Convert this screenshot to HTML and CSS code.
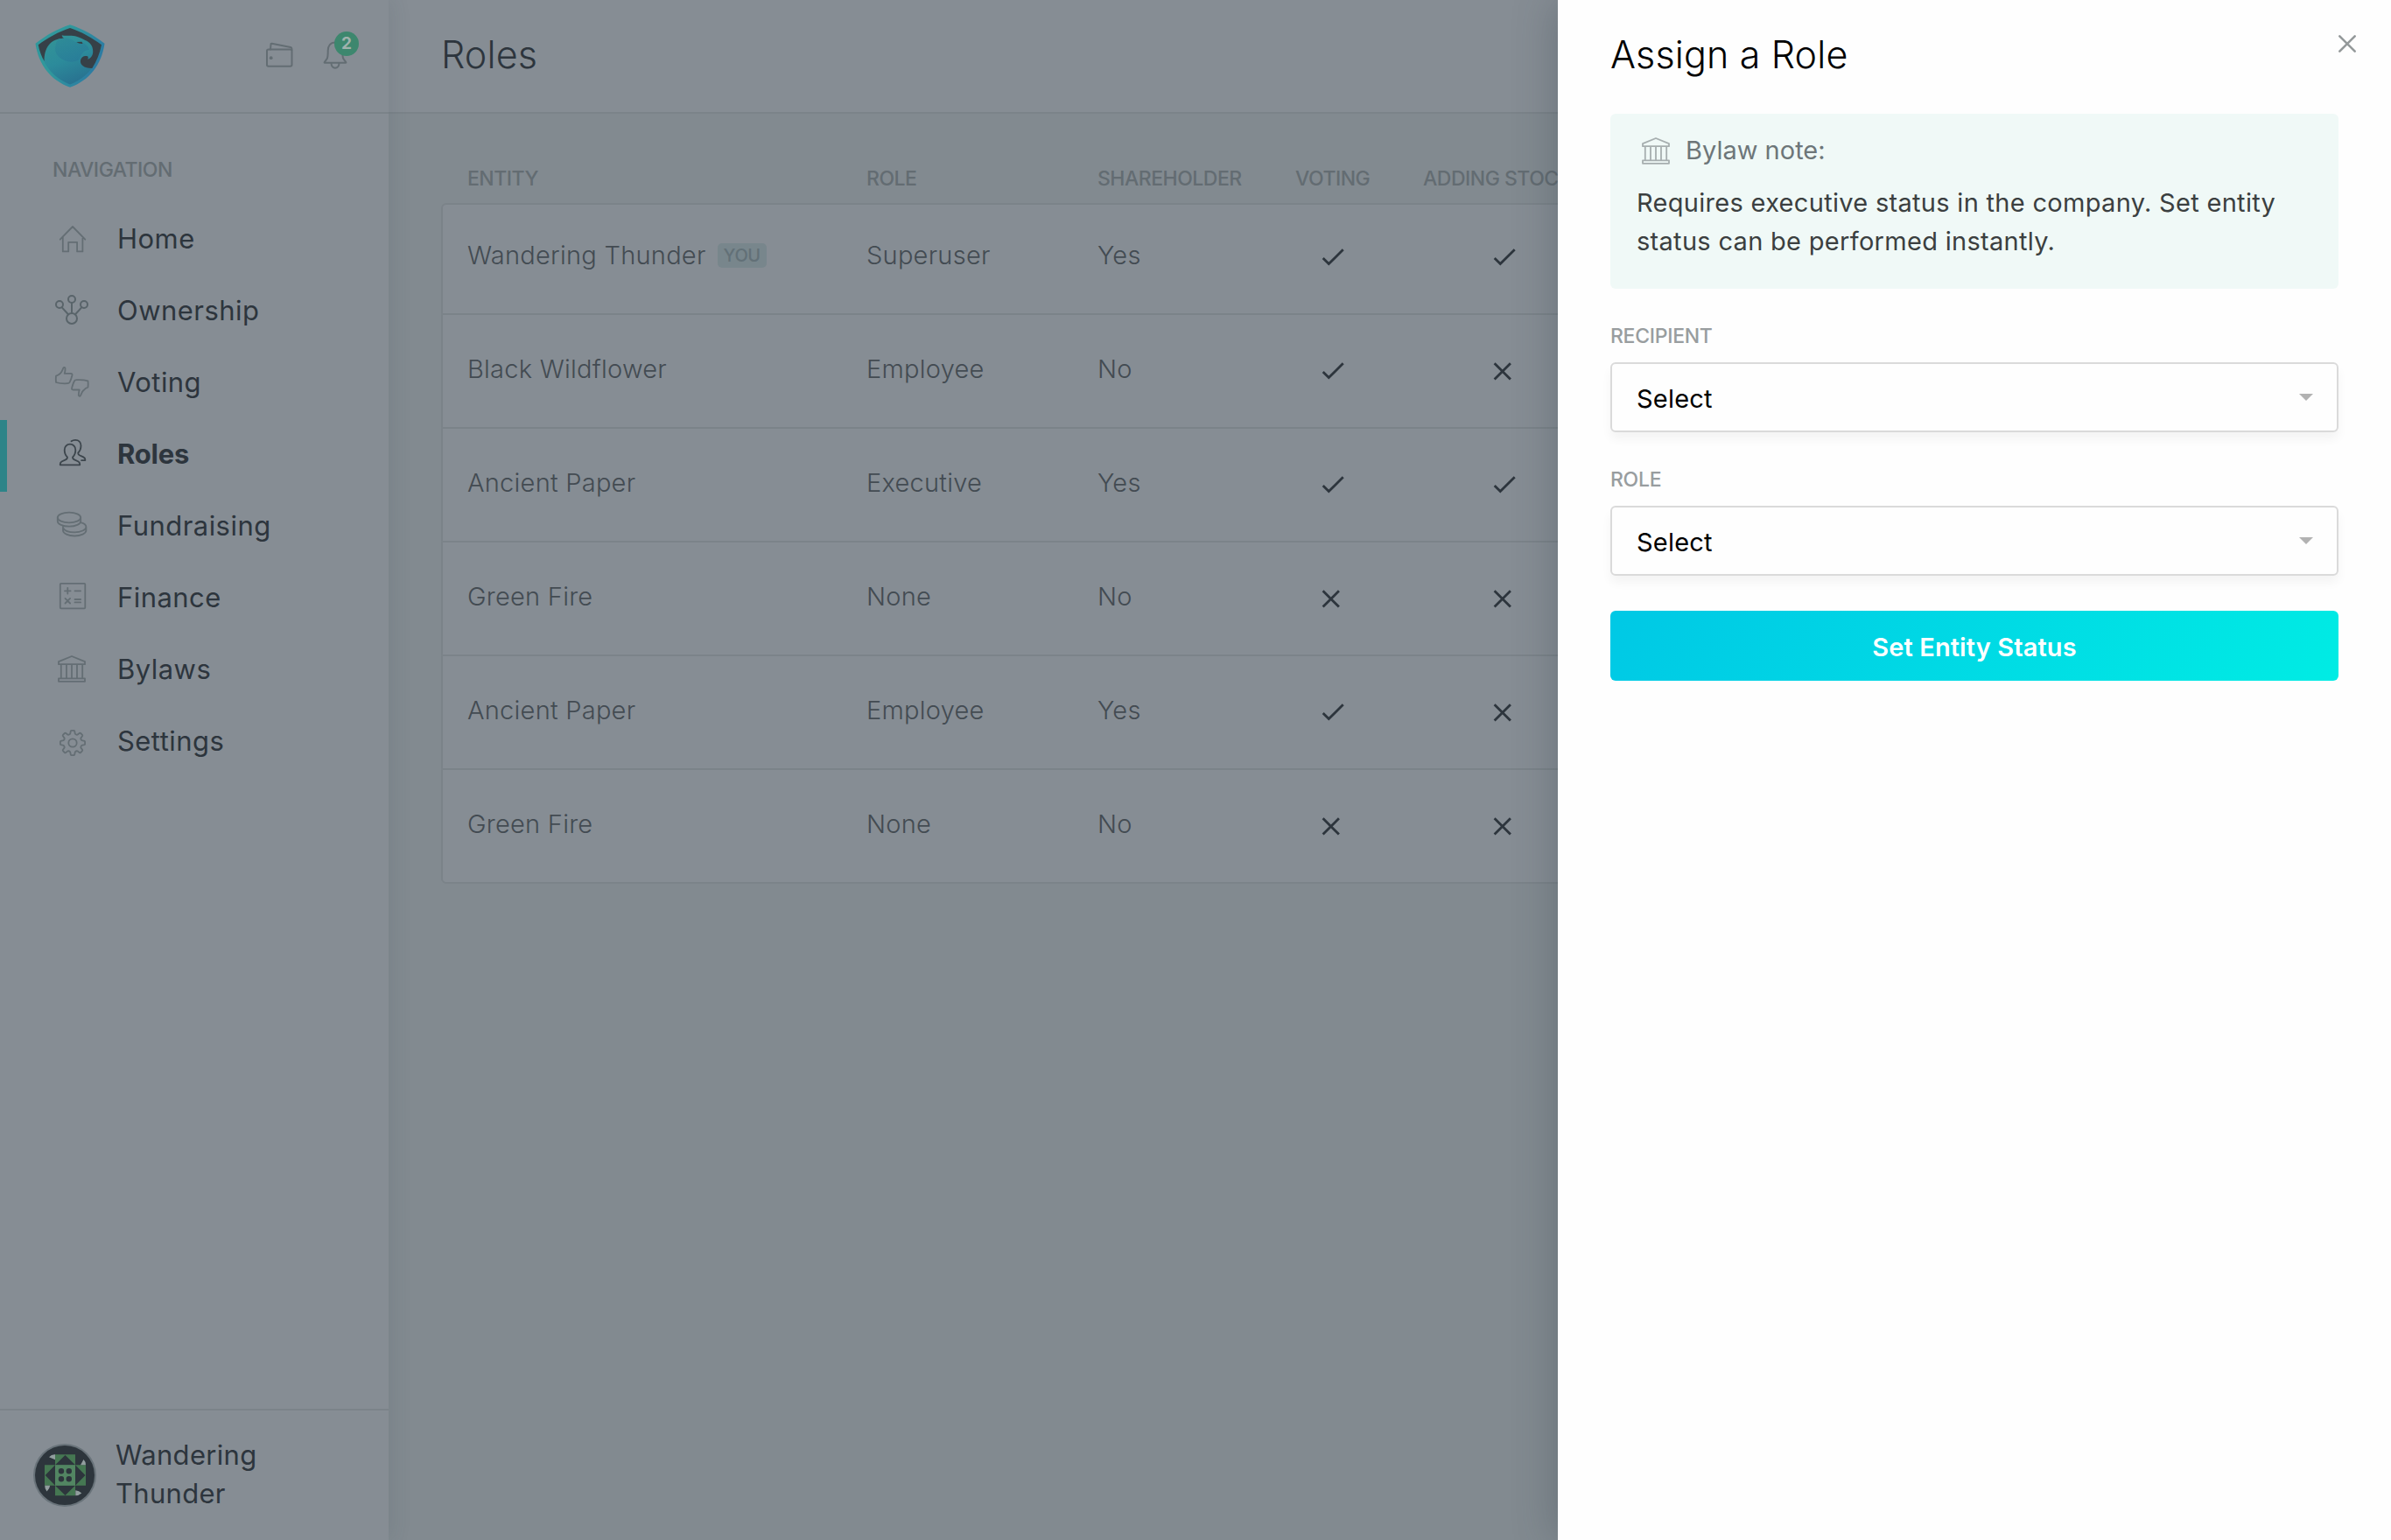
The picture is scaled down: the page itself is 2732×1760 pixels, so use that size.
FILE: index.html
```html
<!DOCTYPE html>
<html lang="en">
<head>
<meta charset="utf-8">
<title>Roles</title>
<link rel="stylesheet" href="styles.css">
</head>
<body>
<svg class="sprite" aria-hidden="true">
  <defs>
    <symbol id="home" viewBox="0 0 44 44"><path d="M8.7 20.7 23 6l14.3 14.7M11.8 17.8v16.6h6.4V23.8h9.9v10.6h6.3V17.8"/></symbol>
    <symbol id="ownership" viewBox="0 0 44 44"><circle cx="8" cy="13" r="4"/><circle cx="22" cy="7" r="4"/><circle cx="36" cy="13" r="4"/><circle cx="22" cy="29" r="6"/><path d="M10.8 16.3 17.7 24M33.2 16.3 26.3 24M22 11.2V23"/></symbol>
    <symbol id="voting" viewBox="0 0 44 44"><path d="M9 9.7C11 8 11.6 5 12.4 3.4c.6-1 2.1-.6 2.1.7.1 2 0 4-.8 5.8h7.2c1.2 0 1.9.8 1.6 1.8-.8 3.2-1.7 6-2.9 8.2-.5.9-1.2 1.3-2.3 1.3-4.6.3-9.3 0-13.3-1.2-.3-2.3-.3-4.7 0-7.3 1.6-.3 3.5-1.4 5-3z"/><path d="M35.3 29.3C33.3 31 32.7 34 31.9 35.2c-.6 1-2.1.6-2.1-.7 0-2 .2-4 1-6h-7.200c-1.200 0-1.900-.8-1.600-1.800.8-3.200 1.700-6 2.900-8.200.5-.9 1.200-1.300 2.300-1.300 4.600-.3 9.300 0 13.300 1.200.3 2.300.3 4.700 0 7.300-1.600.3-3.700 1.900-5.200 3.600z"/></symbol>
    <symbol id="roles" viewBox="0 0 44 44"><path d="M20 8.700c-4 0-6.300 2.700-6.300 6.500 0 3.300 1 6 3.200 8.200.2 1.200-.4 2.100-1.500 2.700L10.500 28.500C9 29.300 8.600 30.600 8.800 32.300H31.200c.2-1.700-.2-3-1.700-3.800l-4.900-2.400c-1.100-.6-1.700-1.500-1.500-2.700 2.200-2.200 3.200-4.900 3.200-8.200 0-3.800-2.300-6.500-6.300-6.500z"/><path d="M21.500 5.300c1.300-1 2.800-1.500 4.500-1.500 4 0 6.500 2.600 6.500 6.500 0 3.300-1 6-3.200 8.200-.2 1.200.4 2.100 1.500 2.700l4.500 2.200c1.700.8 2.300 1.900 2 3.800h-4.200"/></symbol>
    <symbol id="fundraising" viewBox="0 0 44 44"><ellipse cx="19" cy="10.500" rx="13.200" ry="5.900"/><path d="M5.800 10.500v4.200c0 3.300 5.900 6 13.200 6s13.200-2.700 13.200-6v-4.200M12 20.500v4.800c0 3.400 6 6.200 13.200 6.200s13.200-2.800 13.200-6.200v-4c0-2.400-2.500-4.300-6.200-5.200M12.200 22.300c1.300 2.900 6.500 5 13 5 7.200 0 13.200-2.700 13.200-6"/></symbol>
    <symbol id="finance" viewBox="0 0 44 44"><rect x="8.800" y="3.800" width="28.500" height="28.500" rx="1"/><path d="M17.300 9v6.600M14 12.300h6.600M25.500 12.300h6.600M14.500 20.900l5.600 5.600M20.100 20.900l-5.600 5.600M25.500 22h6.600M25.500 25.400h6.600"/></symbol>
    <symbol id="bylaws" viewBox="0 0 44 44"><path d="M22 5 37 11.200v3H7v-3zM7 30.300h30v3.500H7zM9.800 14.200v16M16 14.200v16M22 14.200v16M28 14.200v16M34.200 14.200v16"/></symbol>
    <symbol id="settings" viewBox="0 0 44 44"><circle cx="23" cy="22" r="4.700"/><path transform="translate(23 22)" d="M-2.800-10.400-2.200-13.500Q-2-14.100-1.200-14.100H1.200Q2-14.100 2.200-13.500L2.800-10.400Q4.200-9 5.400-9.300L8-11.200Q8.600-11.500 9.200-11L11-9.200Q11.500-8.600 11.200-8L9.300-5.400Q9-4.200 10.400-2.800L13.500-2.200Q14.100-2 14.100-1.200V1.200Q14.100 2 13.500 2.200L10.400 2.800Q9 4.200 9.300 5.400L11.200 8Q11.500 8.600 11 9.200L9.200 11Q8.600 11.500 8 11.200L5.400 9.300Q4.200 9 2.800 10.400L2.200 13.500Q2 14.100 1.200 14.100H-1.200Q-2 14.100-2.200 13.500L-2.800 10.400Q-4.200 9-5.400 9.300L-8 11.200Q-8.600 11.500-9.200 11L-11 9.200Q-11.500 8.600-11.200 8L-9.300 5.400Q-9 4.200-10.400 2.800L-13.500 2.200Q-14.100 2-14.100 1.200V-1.200Q-14.100-2-13.500-2.200L-10.400-2.800Q-9-4.200-9.300-5.400L-11.200-8Q-11.500-8.600-11-9.200L-9.200-11Q-8.600-11.500-8-11.200L-5.400-9.300Q-4.200-9-2.800-10.400Z"/></symbol>
    <symbol id="check" viewBox="0 0 28 28"><path d="M3.700 15 10.300 21.600 26.700 5.200"/></symbol>
    <symbol id="cross" viewBox="0 0 28 28"><path d="M3.600 5.300 21.900 23.600M21.900 5.300 3.600 23.600"/></symbol>
  </defs>
</svg>

<div class="app">
  <aside class="sidebar">
    <div class="sidebar-top">
      <svg class="logo" width="80" height="72" viewBox="0 0 80 72">
        <defs>
          <linearGradient id="rim" x1="0" y1="0" x2="1" y2=".4"><stop offset=".45" stop-color="#30989c"/><stop offset="1" stop-color="#2c7ba3"/></linearGradient>
          <linearGradient id="eagle" x1=".25" y1=".1" x2=".65" y2="1"><stop offset="0" stop-color="#339496"/><stop offset=".5" stop-color="#2c8b9b"/><stop offset="1" stop-color="#286f8f"/></linearGradient>
          <linearGradient id="face" x1="0" y1="0" x2=".6" y2="1"><stop offset="0" stop-color="#2d8a98"/><stop offset="1" stop-color="#287a98"/></linearGradient>
        </defs>
        <path fill="url(#rim)" d="M40 .3C54 5 67 12 79.500 21.700 76 46 62 64 40 71.700 18 64 4 46 .5 21.700 13 12 26 5 40 .3z"/>
        <path fill="url(#eagle)" d="M40 4c13 4.300 25 11 36 19.300C72 45 60 61 40 68.500 20 61 8 45 4 23.300 15 15 27 8.300 40 4z"/>
        <path fill="#364047" d="M40 4C27 8.300 14.700 15 3.700 23.300 5 30 7.300 36.500 10.700 42c-.5-15.500 7-26 22.600-26.300C31.500 15 31 13.500 30.700 12.300c3.300.9 7 .3 11 .4 6 .2 10.500 2.500 15.600 5.300 5.500 2 8.700 6.500 8.900 12 .3 5-2 8.500-6.200 9.700 1.200-1.300 1-2.600 0-3.400-3.200-1.200-7 .2-8 4.500-.9 5.500 4.500 9.500 13.300 9.200C70.500 42 74 33 76 23.300 65 15 53 8.300 40 4z"/>
        <path fill="url(#face)" d="M26 17.200C35 14 41 16 46 20l8 .5c4 1.500 7 4.500 8 8.500-5-.5-9 4-11 10.500-4 3.500-9.500 4-14.500 2.500C28 39.500 23 34 23 28c0-4 1-8 3-10.800z" opacity=".75"/>
        <path fill="#364047" d="m47.300 20 6.200-.2 1 2.200q-4 .4-7.200-2z"/>
      </svg>
      <svg class="wallet line" width="32" height="30" viewBox="0 0 32 30"><rect x="2" y="8.500" width="28.500" height="19.300" rx="1.800"/><path d="M6 8.500 6.500 2.600q.1-1 1.100-.8L29 5.900q1.500.4 1.500 3"/><circle class="dot" cx="6.700" cy="18.200" r="1.900"/></svg>
      <span class="bell">
        <svg class="line" width="30" height="34" viewBox="0 0 30 34"><path d="M14 2.500c-5.400 0-8.300 4-8.300 9.500 0 4 .2 7.500-1.400 9.700L1.700 25.200q-.4.600.3.600h24q.7 0 .3-.6l-2.600-3.500c-1.600-2.200-1.400-5.700-1.400-9.700 0-5.500-2.900-9.500-8.300-9.500zM9.500 26c0 7.500 9 7.500 9 0"/></svg>
        <b class="badge">2</b>
      </span>
    </div>
    <h2 class="label nav-label">NAVIGATION</h2>
    <nav class="nav">
      <a><svg><use href="#home"/></svg><span>Home</span></a>
      <a><svg class="strong"><use href="#ownership"/></svg><span>Ownership</span></a>
      <a><svg><use href="#voting"/></svg><span>Voting</span></a>
      <a class="active"><svg><use href="#roles"/></svg><span>Roles</span></a>
      <a><svg><use href="#fundraising"/></svg><span>Fundraising</span></a>
      <a><svg><use href="#finance"/></svg><span>Finance</span></a>
      <a><svg><use href="#bylaws"/></svg><span>Bylaws</span></a>
      <a><svg><use href="#settings"/></svg><span>Settings</span></a>
    </nav>
    <div class="account">
      <svg class="avatar" width="72" height="72" viewBox="0 0 72 72">
        <circle cx="36" cy="36" r="36" fill="#69737a"/><circle cx="36" cy="36" r="34" fill="#2d353c"/>
        <path fill="#457752" d="M25 12.300h23v12h12v23.400H48v11.600H25V47.700H13V24.300h12z"/>
        <path fill="#2d353c" d="M36.500 13 48 24.300H25zM36.500 59 25 47.700h23zM13.700 36 25 24.300v23.400zM59.500 36 48 24.300v23.400z"/>
        <path fill="#528562" d="M25 24.300h23v23.400H25z"/>
        <g fill="#2d353c"><circle cx="32" cy="31.200" r="3.200"/><circle cx="40.800" cy="31.200" r="3.200"/><circle cx="32" cy="40.200" r="3.200"/><circle cx="40.800" cy="40.200" r="3.200"/></g>
        <path fill="#929e9f" d="M18 15.300Q21 12 25 12.300v6zM57.500 18Q60.500 21 60 24.300h-6zM13.200 47.700h6q-.5 4-3.700 6.800Q13 51.500 13.200 47.700zM48.300 53.300q4 .3 7 3.300-3 2.700-7 2.700z"/>
      </svg>
      <div class="who">Wandering<br>Thunder</div>
    </div>
  </aside>

  <main class="main">
    <header class="topbar"><h1 class="title">Roles</h1></header>
    <section class="table">
      <div class="thead label"><span>ENTITY</span><span>ROLE</span><span>SHAREHOLDER</span><span>VOTING</span><span>ADDING STOCK</span></div>
      <div class="tbody">
        <div class="row"><span class="cell"><span>Wandering Thunder</span><em class="you">YOU</em></span><span>Superuser</span><span>Yes</span><svg><use href="#check"/></svg><svg><use href="#check"/></svg></div>
        <div class="row"><span>Black Wildflower</span><span>Employee</span><span>No</span><svg><use href="#check"/></svg><svg><use href="#cross"/></svg></div>
        <div class="row"><span>Ancient Paper</span><span>Executive</span><span>Yes</span><svg><use href="#check"/></svg><svg><use href="#check"/></svg></div>
        <div class="row"><span>Green Fire</span><span>None</span><span>No</span><svg><use href="#cross"/></svg><svg><use href="#cross"/></svg></div>
        <div class="row"><span>Ancient Paper</span><span>Employee</span><span>Yes</span><svg><use href="#check"/></svg><svg><use href="#cross"/></svg></div>
        <div class="row"><span>Green Fire</span><span>None</span><span>No</span><svg><use href="#cross"/></svg><svg><use href="#cross"/></svg></div>
      </div>
    </section>
  </main>
</div>

<section class="panel">
  <svg class="close" width="24" height="24" viewBox="0 0 24 24"><path d="M3.300 3.300 20.700 20.700M20.700 3.300 3.300 20.700"/></svg>
  <h1 class="title">Assign a Role</h1>
  <div class="note">
    <div class="note-head"><svg><use href="#bylaws"/></svg><span>Bylaw note:</span></div>
    <p>Requires executive status in the company. Set entity<br>status can be performed instantly.</p>
  </div>
  <div class="label field-label">RECIPIENT</div>
  <div class="select"><span>Select</span><i class="caret"></i></div>
  <div class="label field-label">ROLE</div>
  <div class="select"><span>Select</span><i class="caret"></i></div>
  <div class="button">Set Entity Status</div>
</section>
</body>
</html>
```
FILE: styles.css
```css
* { box-sizing: border-box; }
body {
  margin: 0;
  width: 2732px;
  height: 1760px;
  overflow: hidden;
  position: relative;
  font-family: Inter, "Liberation Sans", sans-serif;
  font-size: 29px;
  font-weight: 400;
  background: #828a90;
}
h1, h2, p { margin: 0; font-weight: inherit; }
svg { display: block; flex: none; fill: none; }
.sprite { position: absolute; width: 0; height: 0; }
.app { display: flex; height: 1760px; }

.label { font-size: 23px; line-height: 28px; font-weight: 550; letter-spacing: -.5px; color: #636c72; }
.title { font-size: 43px; line-height: 125px; font-weight: 300; letter-spacing: .15px; }

/* Sidebar */
.sidebar {
  display: flex;
  flex-direction: column;
  flex: none;
  width: 444px;
  background: #868d94;
  color: #2d353d;
  box-shadow: 2px 0 22px rgba(60, 75, 85, .14);
  z-index: 1;
}
.sidebar-top {
  display: flex;
  height: 130px;
  padding: 28px 0 0 40px;
  border-bottom: 2px solid #7b8389;
}
.line { stroke: #636d73; stroke-width: 2; stroke-linejoin: round; stroke-linecap: round; }
.line .dot { fill: #636d73; stroke: none; }
.wallet { margin: 20px 0 0 183px; }
.bell { position: relative; margin: 18px 0 0 34px; width: 30px; height: 34px; }
.badge {
  position: absolute;
  left: 13px;
  top: -10px;
  width: 28px;
  height: 28px;
  border-radius: 50%;
  background: #3d876e;
  color: #a0b2ad;
  font-size: 19px;
  line-height: 27px;
  font-weight: 700;
  text-align: center;
}
.nav-label { margin: 50px 0 26px 60px; }
.nav a {
  display: flex;
  height: 82px;
  padding-left: 60px;
  gap: 30px;
  font-size: 31px;
  font-weight: 370;
  line-height: 78px;
  letter-spacing: .45px;
}
.nav svg {
  width: 44px;
  height: 44px;
  margin-top: 19px;
  stroke: #646e74;
  stroke-width: 1.8;
  stroke-linejoin: round;
  stroke-linecap: round;
}
.nav .strong { stroke: #59646a; stroke-width: 2; }
.nav .active {
  border-left: 8px solid #2d8488;
  padding-left: 52px;
  font-weight: 650;
  letter-spacing: -.2px;
}
.nav .active svg { stroke: #3c454c; }
.account {
  display: flex;
  height: 150px;
  margin-top: auto;
  border-top: 2px solid #7b8389;
  padding: 29px 0 0 38px;
  gap: 22px;
  font-size: 31px;
  font-weight: 370;
  line-height: 44px;
  letter-spacing: .3px;
}
.avatar { margin-top: 9px; }

/* Roles table */
.main { flex: 1; min-width: 0; }
.topbar {
  height: 130px;
  padding-left: 60px;
  background: #868d94;
  border-bottom: 2px solid #7b8389;
  color: #2d353d;
}
.table { padding: 60px 60px 0; }
.thead, .row {
  display: grid;
  grid-template-columns: 456px 264px 226px 146px 1fr;
}
.thead { padding-left: 30px; height: 42px; white-space: nowrap; }
.tbody {
  border: 2px solid #7b8389;
  border-radius: 6px;
  background: #868d94;
}
.row {
  height: 130px;
  padding-left: 28px;
  border-bottom: 2px solid #7b8389;
  font-weight: 350;
  line-height: 123px;
  letter-spacing: .25px;
  color: #434b52;
}
.row:first-child { height: 126px; line-height: 115px; }
.row:last-child { height: 128px; border-bottom: 0; }
.row svg {
  width: 28px;
  height: 28px;
  margin: 50px 0 0 28px;
  stroke: #2d353d;
  stroke-width: 2.8;
}
.row:first-child svg { margin-top: 46px; }
.row svg:last-child { margin-left: 78px; }
.cell { display: flex; }
.you {
  height: 28px;
  margin: 44px 0 0 13px;
  padding: 0 7px;
  border-radius: 5px;
  background: #78868c;
  color: #627077;
  font-size: 20px;
  font-style: normal;
  font-weight: 500;
  line-height: 29px;
  letter-spacing: -.4px;
}

/* Side panel */
.panel {
  position: absolute;
  top: 0;
  right: 0;
  z-index: 2;
  width: 952px;
  height: 1760px;
  padding: 0 60px;
  background: #fefefe;
  color: #000;
  box-shadow: -4px 0 44px rgba(45, 60, 70, .3);
}
.panel .title { height: 130px; }
.close {
  position: absolute;
  top: 38px;
  right: 38px;
  stroke: #94999a;
  stroke-width: 2.6;
  stroke-linecap: round;
}
.note {
  height: 200px;
  padding: 22px 30px 0;
  border-radius: 6px;
  background: #f0f9f7;
  color: #3b3f40;
  white-space: nowrap;
}
.note-head {
  display: flex;
  gap: 12px;
  height: 40px;
  margin-bottom: 18px;
  line-height: 40px;
  font-weight: 430;
  color: #6d7679;
}
.note-head svg {
  width: 44px;
  height: 44px;
  margin-top: 1px;
  stroke: #a6aeaf;
  stroke-width: 1.8;
  stroke-linejoin: round;
}
.note p { line-height: 44px; font-weight: 370; letter-spacing: .3px; }
.field-label { margin: 40px 0 16px; color: #989d9f; letter-spacing: -.3px; }
.select {
  display: flex;
  justify-content: space-between;
  align-items: center;
  height: 80px;
  padding: 3px 27px 0 28px;
  border: 2px solid #dadada;
  border-radius: 6px;
  background: #fefefe;
  box-shadow: 0 8px 12px rgba(0, 0, 0, .045);
  font-weight: 430;
  letter-spacing: .2px;
}
.caret {
  margin-top: -3px;
  border: 8px solid transparent;
  border-top-color: #b2b2b2;
  border-bottom: 0;
}
.button {
  height: 80px;
  margin-top: 40px;
  padding-top: 2px;
  border-radius: 6px;
  background: linear-gradient(130deg, #00c8e5, #00ece4);
  color: #fff;
  font-weight: 600;
  line-height: 80px;
  letter-spacing: .1px;
  text-align: center;
}
```
